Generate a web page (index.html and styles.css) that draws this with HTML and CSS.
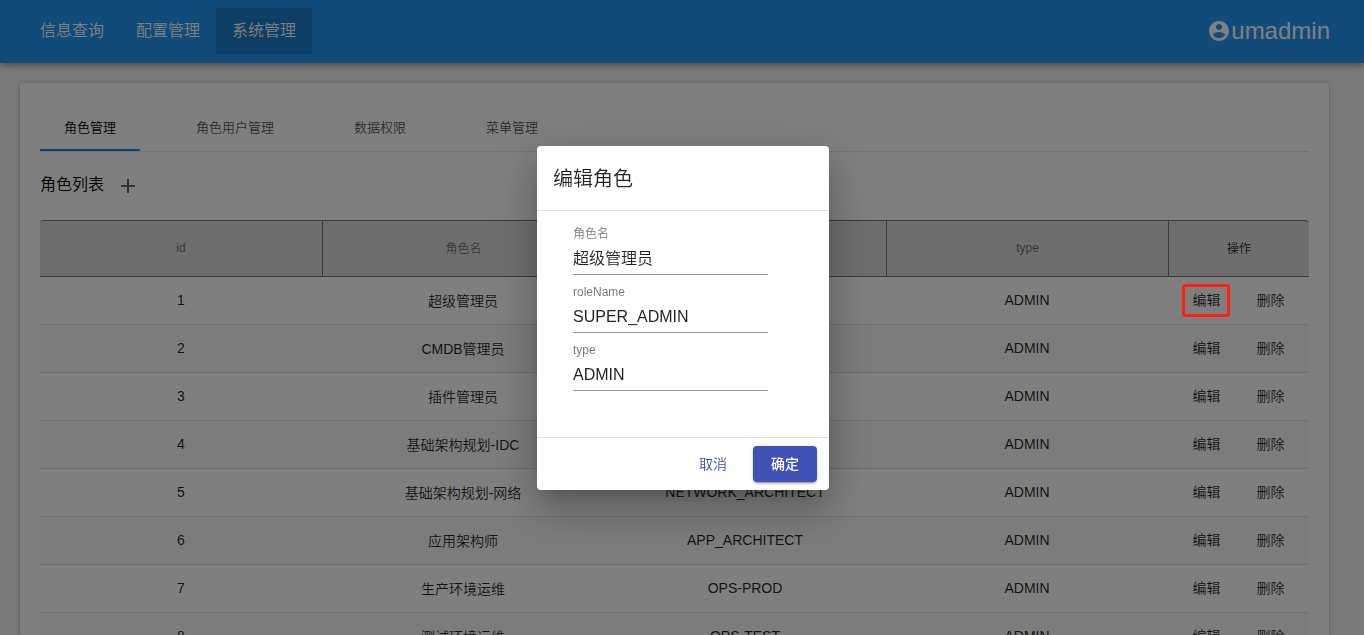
FILE: index.html
```html
<!DOCTYPE html>
<html lang="zh-CN">
<head>
<meta charset="utf-8">
<title>角色管理</title>
<link rel="stylesheet" href="styles.css">
</head>
<body>
<header class="topbar">
  <nav class="menu">
    <a class="menu-item">信息查询</a>
    <a class="menu-item">配置管理</a>
    <a class="menu-item active">系统管理</a>
  </nav>
  <div class="user">
    <svg class="user-icon" viewBox="2 2 20 20"><path fill="currentColor" d="M12 2C6.48 2 2 6.48 2 12s4.48 10 10 10 10-4.48 10-10S17.52 2 12 2zm0 3c1.66 0 3 1.34 3 3s-1.34 3-3 3-3-1.34-3-3 1.34-3 3-3zm0 14.2c-2.5 0-4.71-1.28-6-3.22.03-1.99 4-3.08 6-3.08 1.99 0 5.97 1.09 6 3.08-1.29 1.94-3.5 3.22-6 3.22z"/></svg>
    <span>umadmin</span>
  </div>
</header>
<main class="card">
  <div class="tabs">
    <div class="tab selected">角色管理</div>
    <div class="tab">角色用户管理</div>
    <div class="tab">数据权限</div>
    <div class="tab">菜单管理</div>
  </div>
  <div class="list-title">
    <span>角色列表</span>
    <svg class="plus" viewBox="5 5 14 14"><path fill="currentColor" d="M19 13h-6v6h-2v-6H5v-2h6V5h2v6h6v2z"/></svg>
  </div>
  <div class="table">
    <div class="row head"><div>id</div><div class="name">角色名</div><div>roleName</div><div>type</div><div class="ops-head">操作</div></div>
    <div class="row"><div>1</div><div class="name">超级管理员</div><div>SUPER_ADMIN</div><div>ADMIN</div><div class="ops"><a>编辑</a><a>删除</a></div></div>
    <div class="row"><div>2</div><div class="name">CMDB管理员</div><div>CMDB_ADMIN</div><div>ADMIN</div><div class="ops"><a>编辑</a><a>删除</a></div></div>
    <div class="row"><div>3</div><div class="name">插件管理员</div><div>PLUGIN_ADMIN</div><div>ADMIN</div><div class="ops"><a>编辑</a><a>删除</a></div></div>
    <div class="row"><div>4</div><div class="name">基础架构规划-IDC</div><div>IDC_ARCHITECT</div><div>ADMIN</div><div class="ops"><a>编辑</a><a>删除</a></div></div>
    <div class="row"><div>5</div><div class="name">基础架构规划-网络</div><div>NETWORK_ARCHITECT</div><div>ADMIN</div><div class="ops"><a>编辑</a><a>删除</a></div></div>
    <div class="row"><div>6</div><div class="name">应用架构师</div><div>APP_ARCHITECT</div><div>ADMIN</div><div class="ops"><a>编辑</a><a>删除</a></div></div>
    <div class="row"><div>7</div><div class="name">生产环境运维</div><div>OPS-PROD</div><div>ADMIN</div><div class="ops"><a>编辑</a><a>删除</a></div></div>
    <div class="row"><div>8</div><div class="name">测试环境运维</div><div>OPS-TEST</div><div>ADMIN</div><div class="ops"><a>编辑</a><a>删除</a></div></div>
  </div>
</main>
<div class="backdrop">
  <section class="dialog">
    <h2 class="dialog-title">编辑角色</h2>
    <div class="dialog-body">
      <div class="field"><label>角色名</label><div class="value">超级管理员</div></div>
      <div class="field"><label>roleName</label><div class="value">SUPER_ADMIN</div></div>
      <div class="field"><label>type</label><div class="value">ADMIN</div></div>
    </div>
    <div class="dialog-actions">
      <button class="btn">取消</button>
      <button class="btn primary">确定</button>
    </div>
  </section>
</div>
<div class="highlight"></div>
</body>
</html>
```
FILE: styles.css
```css
* { box-sizing: border-box; }
html, body { height: 100%; }
body {
  margin: 0;
  overflow: hidden;
  background: #f2f2f2;
  font-family: "Liberation Sans", "Noto Sans CJK SC", sans-serif;
  font-size: 14px;
  font-weight: 350;
  color: rgba(0, 0, 0, .87);
}
.topbar {
  position: relative;
  display: flex;
  justify-content: space-between;
  height: 63px;
  padding: 8px 34px 9px 24px;
  background: #2196f3;
  color: #fff;
  box-shadow: 0 2px 4px -1px rgba(0,0,0,.2), 0 4px 5px rgba(0,0,0,.14), 0 1px 10px rgba(0,0,0,.12);
}
.menu { display: flex; }
.menu-item { width: 96px; height: 46px; line-height: 45px; text-align: center; font-size: 16px; }
.menu-item.active { background: rgba(0, 0, 0, .17); }
.user { display: flex; align-items: center; gap: 2px; font-size: 24px; line-height: 46px; }
.user-icon { width: 20px; height: 20px; }
.card {
  width: 1309px;
  height: 552px;
  overflow: hidden;
  margin: 20px 0 0 20px;
  padding: 20px 20px 0;
  background: #fff;
  border-radius: 4px 4px 0 0;
  box-shadow: 0 3px 1px -2px rgba(0,0,0,.2), 0 2px 2px rgba(0,0,0,.14), 0 1px 5px rgba(0,0,0,.2);
}
.tabs { display: flex; gap: 32px; height: 49px; border-bottom: 1px solid #e3e3e3; }
.tab { height: 48px; padding: 0 24px; line-height: 50px; font-size: 13px; color: rgba(0,0,0,.7); }
.tab.selected { color: #000; border-bottom: 2px solid #1989ef; }
.list-title { display: flex; align-items: center; gap: 17px; height: 68px; padding-bottom: 2px; font-size: 16px; line-height: 66px; color: #000; }
.plus { width: 14px; height: 14px; margin-top: 2px; color: #666; }
.row {
  display: grid;
  grid-template-columns: 283px 282px 282px 282px 140px;
  grid-template-rows: 47px;
  height: 48px;
  line-height: 47px;
  text-align: center;
  border-bottom: 1px solid #dedede;
}
.row > div { padding-right: 2px; white-space: nowrap; }
.row > div:first-child { padding-right: 1px; }
.row > .name { line-height: 49px; }
.row:nth-child(odd) { background: #f8f8f8; }
.row.head {
  grid-template-rows: 55px;
  height: 57px;
  line-height: 55px;
  font-size: 12px;
  color: rgba(0, 0, 0, .54);
  background: #ddd;
  border: solid #767676;
  border-width: 1px 0;
  border-radius: 4px 4px 0 0;
}
.row.head > div { padding-right: 0; }
.row.head > .name { line-height: 57px; }
.row.head > div:not(:last-child) { border-right: 1px solid #767676; }
.row.head .ops-head { color: rgba(0, 0, 0, .87); line-height: 57px; }
.row .ops { display: flex; justify-content: center; gap: 36px; padding: 0 1px 0 0; }
.backdrop {
  position: fixed;
  inset: 0;
  display: flex;
  align-items: flex-start;
  justify-content: center;
  padding: 146px 0 0 2px;
  background: rgba(0, 0, 0, .5);
}
.dialog {
  width: 292px;
  height: 344px;
  display: flex;
  flex-direction: column;
  background: #fff;
  border-radius: 4px;
  box-shadow: 0 11px 15px -7px rgba(0,0,0,.2), 0 24px 38px 3px rgba(0,0,0,.14), 0 9px 46px 8px rgba(0,0,0,.12);
}
.dialog-title { margin: 0; height: 65px; padding: 1px 0 0 16px; line-height: 64px; font-size: 20px; font-weight: 350; border-bottom: 1px solid #e0e0e0; }
.dialog-body { flex: 1; padding: 6px 36px 0; }
.field { width: 195px; height: 58px; padding-top: 8px; border-bottom: 1px solid #949494; }
.field label { display: block; height: 18px; line-height: 18px; font-size: 12px; color: rgba(0, 0, 0, .54); }
.value { height: 30px; line-height: 31px; font-size: 16px; }
.dialog-actions { display: flex; justify-content: flex-end; gap: 8px; height: 53px; padding: 8px 12px 8px 0; border-top: 1px solid #e0e0e0; }
.btn { width: 64px; height: 36px; padding: 0; border: 0; border-radius: 4px; background: transparent; color: #3f51b5; font: 350 14px/36px "Liberation Sans", "Noto Sans CJK SC", sans-serif; }
.btn.primary { background: #3f51b5; color: #fff; font-weight: 500; box-shadow: 0 3px 1px -2px rgba(0,0,0,.2), 0 2px 2px rgba(0,0,0,.14), 0 1px 5px rgba(0,0,0,.12); }
.highlight { position: absolute; left: 1182px; top: 284px; width: 48px; height: 33px; border: 3px solid #ff2010; border-radius: 3px; }
```
